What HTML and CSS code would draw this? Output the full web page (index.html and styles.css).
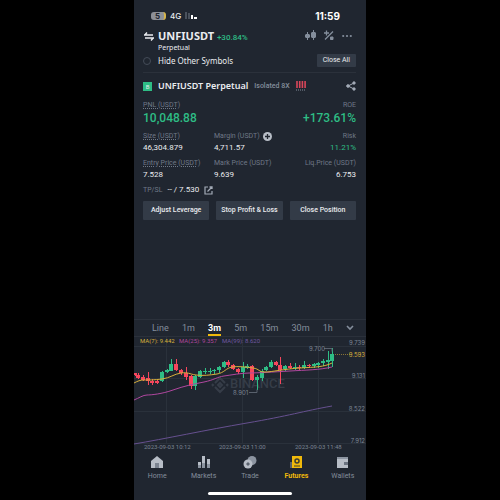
FILE: index.html
```html
<!DOCTYPE html>
<html lang="en">
<head>
  <meta charset="UTF-8">
  <title>UNFIUSDT Perpetual</title>
  <link rel="stylesheet" href="styles.css">
</head>
<body>
  <main class="phone">
    <div class="status">
      <span class="battery">5</span>
      <span class="network">4G</span>
      <svg class="signal" width="12" height="8" viewBox="0 0 12 8">
        <path d="M0 0h2v7H0zM3 1h2v6H3z" fill="#4a515c"/>
        <path d="M6 3h2v4H6zM9 5h3v2H9z" fill="#fff"/>
      </svg>
      <span class="clock">11:59</span>
    </div>

    <header class="topbar">
      <svg class="swap" width="10" height="9" viewBox="0 0 10 9" fill="none" stroke="#eaecef" stroke-width="1.4">
        <path d="M0 3h9M3 0.5L0.8 3M1 6h9M9.2 6L7 8.5"/>
      </svg>
      <div>
        <h1>UNFIUSDT <span class="change">+30.84%</span></h1>
        <p class="contract">Perpetual</p>
      </div>
      <div class="tools">
        <svg width="11" height="11" viewBox="0 0 11 11" fill="#848e9c">
          <path d="M2 2h1v8H2zM1 4h3l1 1v2L4 8H1L0 7V5zM8 0h1v10H8zM7 2h3l1 1v4l-1 1H7L6 7V3z"/>
        </svg>
        <svg width="10" height="11" viewBox="0 0 10 11" fill="none" stroke="#848e9c">
          <path d="M1 9.500L9 1.500M0 3h5M2.500 0.500v5" stroke-width="1.3"/>
          <path d="M6.500 7h2.500v2.500H6.500z" fill="#848e9c"/>
        </svg>
        <svg width="10" height="11" viewBox="0 0 10 11" fill="#848e9c">
          <circle cx="1.2" cy="6" r="1.1"/><circle cx="5" cy="6" r="1.1"/><circle cx="8.8" cy="6" r="1.1"/>
        </svg>
      </div>
    </header>

    <div class="filter">
      <label><input type="radio" name="hide">Hide Other Symbols</label>
      <button class="close-all">Close All</button>
    </div>

    <section class="position">
      <div class="title">
        <span class="side">B</span>
        <h2>UNFIUSDT Perpetual</h2>
        <span class="mode">Isolated 8X</span>
        <svg width="10" height="10" viewBox="0 0 10 10">
          <path d="M1 0v7M3.7 0v7M6.4 0v7M9.1 0v7" stroke="#d9465a" stroke-width="1.6"/>
          <path d="M0 9h10" stroke="#848e9c" stroke-dasharray="1 1"/>
        </svg>
        <svg class="share" width="10" height="10" viewBox="0 0 10 10" fill="#a3abb7" stroke="#a3abb7">
          <path d="M8 2L2 5l6 3" fill="none"/>
          <circle cx="8" cy="2" r="1.2"/><circle cx="2" cy="5" r="1.3"/><circle cx="8" cy="8" r="1.2"/>
        </svg>
      </div>

      <dl class="row profit">
        <div><dt><span class="hint">PNL (USDT)</span></dt><dd>10,048.88</dd></div>
        <div class="end"><dt>ROE</dt><dd>+173.61%</dd></div>
      </dl>
      <dl class="row">
        <div><dt><span class="hint">Size (USDT)</span></dt><dd>46,304.879</dd></div>
        <div>
          <dt>Margin (USDT)
            <svg class="plus" width="9" height="9" viewBox="0 0 9 9">
              <circle cx="4.5" cy="4.5" r="4.5" fill="#b7bdc6"/>
              <path d="M2 4.5h5M4.5 2v5" stroke="#202630" stroke-width="1.3"/>
            </svg>
          </dt>
          <dd>4,711.57</dd>
        </div>
        <div class="end"><dt>Risk</dt><dd class="up">11.21%</dd></div>
      </dl>
      <dl class="row">
        <div><dt><span class="hint">Entry Price (USDT)</span></dt><dd>7.528</dd></div>
        <div><dt>Mark Price (USDT)</dt><dd>9.639</dd></div>
        <div class="end"><dt>Liq.Price (USDT)</dt><dd>6.753</dd></div>
      </dl>
      <p class="tpsl">
        <span class="muted">TP/SL</span>
        <span>-- / 7.530</span>
        <svg width="9" height="9" viewBox="0 0 9 9" fill="none" stroke="#a3abb7">
          <path d="M4 1H1v7h7V5" stroke-width="1.2"/>
          <path d="M3.5 5.5L8 1M5.5 1H8v2" stroke-width="1.3"/>
        </svg>
      </p>
      <div class="actions">
        <button>Adjust Leverage</button>
        <button>Stop Profit &amp; Loss</button>
        <button>Close Position</button>
      </div>
    </section>

    <section class="market">
      <div class="intervals">
        <button>Line</button>
        <button>1m</button>
        <button class="active">3m</button>
        <button>5m</button>
        <button>15m</button>
        <button>30m</button>
        <button>1h</button>
        <button aria-label="More">
          <svg width="8" height="6" viewBox="0 0 8 6"><path d="M1 1l3 3 3-3" fill="none" stroke="#848e9c" stroke-width="1.6"/></svg>
        </button>
      </div>
      <svg class="chart" viewBox="0 0 232 114">
        <path class="grid" d="M0 9.5h232M0 41.5h232M0 74.5h232M0 106.5h232M32.5 0v106M108.5 0v106M184.5 0v106"/>
        <g class="watermark">
          <path d="M86 46l2 2-2 2-2-2zM81 46l5-5 5 5M81 50l5 5 5-5M78 47l1 1-1 1M94 47l-1 1 1 1"/>
          <text x="96" y="51">BINANCE</text>
        </g>
        <g id="candles"></g>
        <path class="ma99" d="M0 107C30 102 72 93 113 86S170 74 198 69"/>
        <path class="ma25" d="M0 63C5 61 9 58 13 58S28 57 39 53S60 47 70 45S83 40 90 39S108 36 115 36S140 35 156 34S185 33 198 30"/>
        <path class="ma7" d="M0 46C4 44 6 43 10 43S20 43 28 42S40 37 47 36S55 37 62 38S76 38 83 37S92 31 98 30S112 30 119 31S124 35 131 35S150 32 166 31S190 30 198 26"/>
        <path class="marker" d="M190 11.5h8v3M115 55.500h8v-3"/>
        <path class="last-price" d="M201 17.5h15"/>
        <g class="ma-label">
          <text class="gold" x="6" y="6">MA(7): 9.442</text>
          <text class="pink" x="45" y="6">MA(25): 9.357</text>
          <text class="violet" x="88" y="6">MA(99): 8.620</text>
        </g>
        <g class="axis">
          <text x="175" y="14">9.700</text>
          <text x="99" y="58">8.901</text>
          <text x="231" y="8" text-anchor="end">9.739</text>
          <text class="gold" x="231" y="20" text-anchor="end">9.593</text>
          <text x="231" y="41" text-anchor="end">9.131</text>
          <text x="231" y="74" text-anchor="end">8.522</text>
          <text x="231" y="106" text-anchor="end">7.912</text>
        </g>
        <g class="dates">
          <text x="10" y="112">2023-09-03 10:12</text>
          <text x="85" y="112">2023-09-03 11:00</text>
          <text x="161" y="112">2023-09-03 11:48</text>
        </g>
      </svg>
    </section>

    <nav class="tabs">
      <a href="#">
        <svg width="14" height="13" viewBox="0 0 14 13"><path d="M7 0l6 5v7H1V5z" fill="#b7bdc6"/><path d="M5 7h4v5H5z" fill="#7b8390"/></svg>
        Home
      </a>
      <a href="#">
        <svg width="14" height="13" viewBox="0 0 14 13"><path d="M1 6h3v6H1zM5 0h3v12H5zM10 3h3v9h-3z" fill="#b7bdc6"/><path d="M1 9h3v3H1zM5 7h3v5H5zM10 8h3v4h-3z" fill="#8c94a0"/></svg>
        Markets
      </a>
      <a href="#">
        <svg width="14" height="13" viewBox="0 0 14 13"><circle cx="9" cy="4.5" r="4.5" fill="#8c94a0"/><circle cx="5" cy="8" r="4.5" fill="#b7bdc6"/><path d="M5 6l2 2-2 2-2-2z" fill="#5a626e"/></svg>
        Trade
      </a>
      <a href="#" class="active">
        <svg width="14" height="13" viewBox="0 0 14 13"><path d="M1 6h4v6H1z" fill="#59606b"/><path d="M3 0h10v12H3z" fill="#f0b90b"/><circle cx="8" cy="5" r="2" fill="none" stroke="#3a3c35" stroke-width="1.5"/><path d="M5 10h6" stroke="#3a3c35"/></svg>
        Futures
      </a>
      <a href="#">
        <svg width="14" height="13" viewBox="0 0 14 13"><path d="M1 1h11v11H1z" fill="#b7bdc6"/><path d="M1 1h11v2H1z" fill="#8c94a0"/><path d="M8 6h4v3H8z" fill="#6b7380"/></svg>
        Wallets
      </a>
    </nav>
    <div class="home-bar"></div>
  </main>
  <script src="chart.js"></script>
</body>
</html>
```
FILE: styles.css
```css
* {
  box-sizing: border-box;
}
body {
  margin: 0;
  background: #000;
  color: #eaecef;
  font-family: Roboto, Arial, sans-serif;
  font-size: 8px;
  line-height: 10px;
}
h1, h2, p, dl, dd {
  margin: 0;
}
svg {
  flex: none;
}
button {
  border: 0;
  padding: 0;
  background: none;
  color: inherit;
  font: inherit;
}
.phone {
  display: flex;
  flex-direction: column;
  max-width: 232px;
  min-height: 100vh;
  margin: 0 auto;
  background: #202630;
}
.status {
  display: flex;
  align-items: center;
  gap: 4px;
  padding: 10px 26px 8px 17px;
  font-family: Inter, Arial, sans-serif;
}
.battery {
  width: 15px;
  height: 8px;
  border-radius: 3px;
  border-right: 2px solid #d6b44a;
  background: #8d9097;
  color: #202630;
  font-size: 8px;
  font-weight: 700;
  line-height: 8px;
  text-align: center;
}
.network {
  font-size: 8px;
  font-weight: 500;
}
.clock {
  margin-left: auto;
  color: #fff;
  font-size: 10px;
  font-weight: 700;
  line-height: 12px;
}
.topbar {
  display: flex;
  gap: 4px;
  padding: 0 14px 0 10px;
}
.swap {
  margin-top: 2px;
}
h1 {
  font-family: "Noto Sans", sans-serif;
  font-size: 11px;
  font-weight: 700;
  line-height: 12px;
}
.change {
  color: #2ebd85;
  font-family: Roboto, sans-serif;
  font-size: 8px;
  font-weight: 500;
}
.contract {
  font-family: "Noto Sans", sans-serif;
  font-size: 7px;
  line-height: 7px;
}
.tools {
  display: flex;
  gap: 8px;
  margin-left: auto;
}
.filter {
  display: flex;
  justify-content: space-between;
  align-items: center;
  margin: 3px 10px 0 9px;
  padding-bottom: 5px;
  border-bottom: 1px solid #2b313b;
}
.filter label {
  display: flex;
  align-items: center;
  gap: 7px;
  font-family: "Noto Sans", sans-serif;
  font-size: 8px;
}
.filter input {
  appearance: none;
  width: 8px;
  height: 8px;
  margin: 0;
  border: 1px solid #444c58;
  border-radius: 50%;
}
.close-all {
  padding: 1px 6px 2px;
  border-radius: 1px;
  background: #333b47;
  font-size: 7px;
}
.position {
  padding: 8px 10px 0 9px;
}
.title {
  display: flex;
  align-items: center;
  gap: 6px;
}
.side {
  width: 9px;
  height: 9px;
  background: #2ebd85;
  font-size: 6px;
  line-height: 9px;
  text-align: center;
}
h2 {
  font-family: "Noto Sans", sans-serif;
  font-size: 9px;
  font-weight: 600;
}
.mode {
  color: #848e9c;
  font-size: 7px;
  font-weight: 500;
}
.share {
  margin-left: auto;
}
.row {
  display: grid;
  grid-template-columns: 1fr 1fr 1fr;
  margin-top: 4px;
}
.row.profit {
  grid-template-columns: 1fr 1fr;
  margin-top: 9px;
}
dt, .muted {
  color: #6f7887;
}
dt {
  display: flex;
  align-items: center;
  gap: 3px;
  font-size: 7px;
  white-space: nowrap;
}
.end {
  text-align: right;
}
.end dt {
  justify-content: flex-end;
}
.hint {
  text-decoration: underline dotted;
}
dd {
  font-size: 8px;
  line-height: 13px;
}
.profit dd {
  color: #2ebd85;
  font-size: 12px;
  font-weight: 500;
  line-height: 17px;
}
.up {
  color: #2ebd85;
}
.tpsl {
  display: flex;
  align-items: center;
  gap: 5px;
  margin-top: 4px;
}
.muted {
  font-size: 7px;
}
.actions {
  display: grid;
  grid-template-columns: 1fr 1fr 1fr;
  gap: 7px;
  margin-top: 6px;
}
.actions button {
  padding: 4px 0 5px;
  border-radius: 1px;
  background: #333b47;
  font-size: 7px;
  font-weight: 500;
  white-space: nowrap;
}
.market {
  margin-top: auto;
  border-top: 1px solid #2b313b;
}
.intervals {
  display: flex;
  justify-content: space-between;
  padding: 1px 12px 0 18px;
  border-bottom: 1px solid #2b313b;
  color: #848e9c;
  font-size: 9px;
}
.intervals button {
  padding: 2px 0 1px;
  border-bottom: 2px solid transparent;
}
.intervals .active {
  border-color: #f0b90b;
  color: #fff;
  font-weight: 700;
}
.chart {
  display: block;
  width: 100%;
}
.chart path {
  fill: none;
}
.chart .grid {
  stroke: #2a313b;
}
.chart .ma7 {
  stroke: #d9b13c;
}
.chart .ma25 {
  stroke: #b0479f;
}
.chart .ma99 {
  stroke: #66508f;
}
.chart .marker {
  stroke: #59616d;
}
.chart .last-price {
  stroke: #8a7536;
  stroke-dasharray: 1 1;
}
.chart .watermark path {
  stroke: #363d48;
  stroke-width: 2;
}
.watermark text {
  fill: #363d48;
  font-size: 13px;
  font-weight: 500;
}
.axis, .dates, .ma-label {
  fill: #7b8492;
  font-size: 6px;
}
.axis {
  font-family: Inter, sans-serif;
}
.gold {
  fill: #d9b13c;
}
.pink {
  fill: #b0479f;
}
.violet {
  fill: #7058a0;
}
.up-candle {
  fill: #2ebd85;
}
.down-candle {
  fill: #f6465d;
}
.tabs {
  display: grid;
  grid-template-columns: repeat(5, 1fr);
  padding-top: 5px;
}
.tabs a {
  display: flex;
  flex-direction: column;
  align-items: center;
  gap: 2px;
  color: #848e9c;
  font-size: 7px;
  text-decoration: none;
}
.tabs .active {
  color: #f0b90b;
  font-weight: 700;
}
.home-bar {
  width: 36%;
  height: 3px;
  margin: 11px auto 5px;
  border-radius: 2px;
  background: #fff;
}
```
FILE: chart.js
```javascript
// x, wick top, body top, body bottom, wick bottom, direction
const candles = [
  [1, 36, 36, 38, 39, "down"],
  [4, 36, 38, 41, 42, "down"],
  [9, 38, 40, 43, 44, "down"],
  [14, 35, 41, 44, 48, "down"],
  [18, 42, 44, 46, 48, "down"],
  [23, 43, 44, 46, 47, "down"],
  [28, 34, 35, 44, 45, "up"],
  [33, 32, 33, 35, 36, "up"],
  [37, 22, 27, 34, 34, "up"],
  [42, 22, 27, 33, 34, "down"],
  [47, 32, 33, 36, 38, "down"],
  [52, 30, 36, 40, 43, "down"],
  [57, 38, 39, 49, 52, "down"],
  [61, 38, 39, 49, 53, "up"],
  [66, 33, 34, 40, 41, "up"],
  [71, 31, 34, 35, 37, "up"],
  [76, 31, 34, 35, 37, "up"],
  [80, 32, 33, 34, 37, "up"],
  [85, 29, 30, 33, 36, "up"],
  [90, 24, 25, 30, 31, "up"],
  [94, 23, 25, 28, 30, "down"],
  [99, 27, 28, 32, 33, "down"],
  [104, 31, 32, 35, 37, "down"],
  [109, 25, 30, 35, 41, "up"],
  [113, 27, 29, 31, 32, "up"],
  [118, 28, 29, 43, 44, "down"],
  [123, 38, 40, 43, 53, "up"],
  [128, 32, 34, 41, 44, "up"],
  [132, 29, 30, 33, 34, "up"],
  [137, 23, 25, 30, 31, "up"],
  [142, 24, 25, 28, 29, "down"],
  [146, 20, 28, 33, 47, "down"],
  [151, 28, 29, 32, 34, "up"],
  [156, 26, 29, 31, 32, "down"],
  [161, 26, 30, 31, 33, "up"],
  [165, 28, 30, 31, 33, "down"],
  [170, 24, 28, 31, 32, "up"],
  [175, 27, 28, 29, 31, "down"],
  [180, 26, 27, 29, 31, "up"],
  [184, 25, 26, 28, 31, "up"],
  [189, 22, 24, 26, 29, "up"],
  [194, 14, 23, 25, 32, "up"],
  [198, 11, 17, 24, 30, "up"]
];

const group = document.getElementById("candles");

function addRect(x, y, width, height, direction) {
  const rect = document.createElementNS("http://www.w3.org/2000/svg", "rect");
  rect.setAttribute("x", x);
  rect.setAttribute("y", y);
  rect.setAttribute("width", width);
  rect.setAttribute("height", height);
  rect.setAttribute("class", `${direction}-candle`);
  group.appendChild(rect);
}

candles.forEach(([x, high, top, bottom, low, direction]) => {
  addRect(x, high, 1, low - high, direction);
  addRect(x - 2, top, 4, bottom - top, direction);
});
```
